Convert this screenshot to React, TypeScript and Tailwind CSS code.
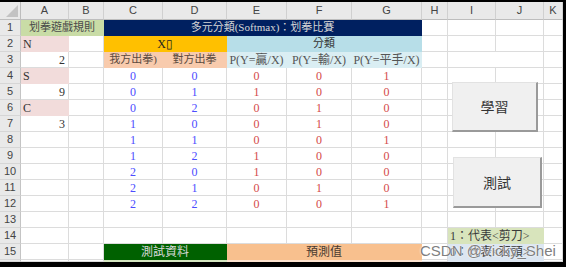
import React from 'react';

type Cell = { w: string; t?: React.ReactNode; bg?: string; cls?: string };

const num = "font-['Liberation_Serif',serif] text-[12px]";
const cjk = "font-['Liberation_Serif','Noto_Sans_CJK_TC',sans-serif] text-[11px]";
const blue = `justify-center text-[#4d4dff] ${num}`;
const red = `justify-center text-[#d44a4a] ${num}`;

const A = 'w-[48px]';
const B = 'w-[35px]';
const C = 'w-[59px]';
const D = 'w-[64px]';
const E = 'w-[60px]';
const F = 'w-[65px]';
const G = 'w-[70px]';
const H = 'w-[26px]';
const I = 'w-[48px]';
const J = 'w-[48px]';
const K = 'w-[19px]';

function Row({ n, h = 'h-[16px]', cells }: { n: React.ReactNode; h?: string; cells: Cell[] }) {
  return (
    <div className={`flex ${h} overflow-hidden`}>
      <div className="w-[21px] shrink-0 flex items-center justify-center bg-[#e9e9e9] border-r border-b border-r-[#c4c4c4] border-b-[#d6d6d6] text-[11px] text-[#444] font-['Liberation_Sans',sans-serif]">
        {n}
      </div>
      {cells.map((c, i) => (
        <div
          key={i}
          className={`${c.w} shrink-0 flex items-center border-r border-b whitespace-nowrap overflow-visible ${c.bg ? `${c.bg} border-transparent` : 'bg-white border-[#dcdcdc]'} ${c.cls ?? ''}`}
        >
          {c.t}
        </div>
      ))}
    </div>
  );
}

const tail: Cell[] = [{ w: H }, { w: I }, { w: J }, { w: K }];

const data: [number, number, number, number, number][] = [
  [0, 0, 0, 0, 1],
  [0, 1, 1, 0, 0],
  [0, 2, 0, 1, 0],
  [1, 0, 0, 1, 0],
  [1, 1, 0, 0, 1],
  [1, 2, 1, 0, 0],
  [2, 0, 1, 0, 0],
  [2, 1, 0, 1, 0],
  [2, 2, 0, 0, 1],
];

const aCol: Record<number, Cell> = {
  4: { w: A, t: 'S', bg: 'bg-[#f2dcdb]', cls: `pl-[2px] text-[#333] ${num}` },
  5: { w: A, t: '9', cls: `justify-end pr-[3px] text-[#333] ${num}` },
  6: { w: A, t: 'C', bg: 'bg-[#f2dcdb]', cls: `pl-[2px] text-[#333] ${num}` },
  7: { w: A, t: '3', cls: `justify-end pr-[3px] text-[#333] ${num}` },
};

export default function App() {
  const letters: [string, string][] = [
    [A, 'A'], [B, 'B'], [C, 'C'], [D, 'D'], [E, 'E'], [F, 'F'], [G, 'G'], [H, 'H'], [I, 'I'], [J, 'J'], [K, 'K'],
  ];
  return (
    <div className="relative w-[566px] h-[267px] overflow-hidden bg-white border-t-2 border-r-[3px] border-b-[5px] border-black">
      {/* column header */}
      <div className="flex h-[18px]">
        <div className="w-[21px] shrink-0 relative bg-[#e9e9e9] border-r border-b border-[#bdbdbd]">
          <svg width="12" height="12" viewBox="0 0 12 12" className="absolute right-[2px] bottom-[2px]">
            <polygon points="12,0 12,12 0,12" fill="#c3c3c3" />
          </svg>
        </div>
        {letters.map(([w, l]) => (
          <div key={l} className={`${w} shrink-0 flex items-center justify-center bg-[#e9e9e9] border-r border-b border-r-[#d0d0d0] border-b-[#bdbdbd] text-[11px] text-[#444] font-['Liberation_Sans',sans-serif]`}>
            {l}
          </div>
        ))}
      </div>

      <Row
        n="1"
        cells={[
          { w: 'w-[83px]', t: '划拳遊戲規則', bg: 'bg-[#c9dca6]', cls: `justify-center text-[#4a4a4a] ${cjk}` },
          { w: 'w-[318px]', t: '多元分類(Softmax)：划拳比賽', bg: 'bg-[#002060]', cls: `justify-center text-[#d6d6d6] ${cjk}` },
          ...tail,
        ]}
      />
      <Row
        n="2"
        cells={[
          { w: A, t: 'N', bg: 'bg-[#f2dcdb]', cls: `pl-[2px] text-[#333] ${num}` },
          { w: B },
          { w: 'w-[123px]', t: 'X▯', bg: 'bg-[#ffc000]', cls: `justify-center text-[#222] ${cjk} text-[12px]` },
          { w: 'w-[195px]', t: '分類', bg: 'bg-[#b7dee8]', cls: `justify-center text-[#333] ${cjk}` },
          ...tail,
        ]}
      />
      <Row
        n="3"
        cells={[
          { w: A, t: '2', cls: `justify-end pr-[3px] text-[#333] ${num}` },
          { w: B },
          { w: C, t: '我方出拳)', bg: 'bg-[#f8cbad]', cls: `justify-center text-[#5b4a40] ${cjk}` },
          { w: D, t: '對方出拳', bg: 'bg-[#f8cbad]', cls: `justify-center text-[#5b4a40] ${cjk}` },
          { w: E, t: 'P(Y=贏/X)', bg: 'bg-[#daeef3]', cls: `justify-center text-[#555] ${cjk} text-[12px]` },
          { w: F, t: 'P(Y=輸/X)', bg: 'bg-[#daeef3]', cls: `justify-center text-[#555] ${cjk} text-[12px]` },
          { w: G, t: 'P(Y=平手/X)', bg: 'bg-[#daeef3]', cls: `justify-center text-[#555] ${cjk} text-[12px]` },
          { w: H },
          { w: 'w-[96px]' },
          { w: K },
        ]}
      />
      {data.map((d, i) => {
        const r = i + 4;
        return (
          <Row
            key={r}
            n={r}
            cells={[
              aCol[r] ?? { w: A },
              { w: B },
              { w: C, t: d[0], cls: blue },
              { w: D, t: d[1], cls: blue },
              { w: E, t: d[2], cls: red },
              { w: F, t: d[3], cls: red },
              { w: G, t: d[4], cls: red },
              ...tail,
            ]}
          />
        );
      })}
      <Row n="13" cells={[{ w: A }, { w: B }, { w: C }, { w: D }, { w: E }, { w: F }, { w: G }, ...tail]} />
      <Row
        n="14"
        cells={[
          { w: A }, { w: B }, { w: C }, { w: D }, { w: E }, { w: F }, { w: G }, { w: H },
          { w: 'w-[96px]', t: '1：代表<剪刀>', bg: 'bg-[#d8e4bc]', cls: `pl-[2px] text-[#3a3a3a] ${cjk} text-[12px]` },
          { w: K },
        ]}
      />
      <Row
        n="15"
        cells={[
          { w: A }, { w: B },
          { w: 'w-[123px]', t: '測試資料', bg: 'bg-[#006100]', cls: `justify-center text-[#d9d9d9] ${cjk} text-[12px]` },
          { w: 'w-[195px]', t: '預測值', bg: 'bg-[#f8c08e]', cls: `justify-center text-[#4a3a30] ${cjk} text-[12px]` },
          { w: H },
          { w: 'w-[96px]', t: '0：代表<石頭>', bg: 'bg-[#dce6f1]', cls: `pl-[2px] text-[#3a3a3a] ${cjk} text-[12px]` },
          { w: K },
        ]}
      />
      <Row
        n=""
        h="h-[2px]"
        cells={[
          { w: A }, { w: B },
          { w: 'w-[123px]', bg: 'bg-[#d4e6c0]' },
          { w: 'w-[195px]', bg: 'bg-[#fde3cf]' },
          { w: H },
          { w: 'w-[96px]', bg: 'bg-[#dce6f1]' },
          { w: K },
        ]}
      />

      <button className="absolute left-[452px] top-[80px] w-[86px] h-[50px] flex items-center justify-center bg-[#f0f0f0] border border-[#e2e2e2] border-r-2 border-b-2 border-r-[#9a9a9a] border-b-[#9a9a9a] text-[14px] text-[#333] font-['Noto_Sans_CJK_TC',sans-serif]">
        學習
      </button>
      <button className="absolute left-[453px] top-[155px] w-[89px] h-[51px] flex items-center justify-center bg-[#f0f0f0] border border-[#e2e2e2] border-r-2 border-b-2 border-r-[#9a9a9a] border-b-[#9a9a9a] text-[14px] text-[#333] font-['Noto_Sans_CJK_TC',sans-serif]">
        測試
      </button>

      <div className="absolute left-[420px] top-[240px] text-[15px] leading-[18px] text-[#808080] font-['Liberation_Sans',sans-serif] [text-shadow:0_0_1px_#fff,0_0_2px_#fff] whitespace-nowrap">
        CSDN @Vicky_Shei
      </div>
    </div>
  );
}
